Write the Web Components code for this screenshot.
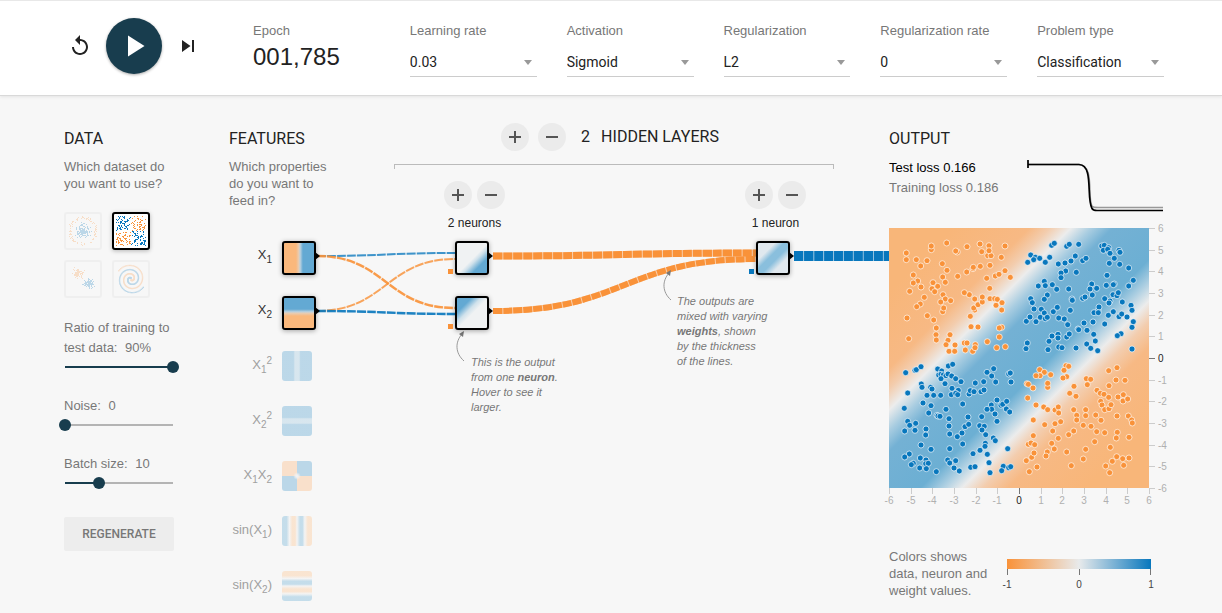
<!DOCTYPE html>
<html lang="en">
<head>
<meta charset="utf-8">
<title>Neural network playground</title>
<style>
html,body{margin:0}
body{background:#f7f7f7;color:#777;font:400 13px/17px "Liberation Sans",Arial,sans-serif}
</style>
</head>
<body>
<play-app></play-app>
<script>
const define = (name, html, setup) => {
  const tpl = document.createElement('template');
  tpl.innerHTML = html;
  customElements.define(name, class extends HTMLElement {
    constructor() {
      super();
      this.attachShadow({mode: 'open'}).append(tpl.content.cloneNode(true));
    }
    connectedCallback() { if (setup) setup(this, this.shadowRoot); }
  });
};
const BLUE = '#0877bd', ORANGE = '#f99239';
let seed = 7;
const rnd = () => (seed = (seed * 16807) % 2147483647) / 2147483647;
const gauss = () => rnd() + rnd() + rnd() + rnd() - 2;

/* Drop-down with its label */
define('labelled-select', `<style>
:host{display:block;min-width:0}
label{display:block;line-height:20px}
.box{position:relative;margin-top:6px}
select{appearance:none;display:block;width:100%;height:30px;margin:0;padding:1px 20px 0 0;border:0;border-bottom:1px solid #ccc;border-radius:0;background:none;color:#222;font:400 14px/28px Roboto,sans-serif}
.box::after{content:"";position:absolute;right:5px;top:13px;border:4px solid transparent;border-top:5px solid #999;border-bottom:0;pointer-events:none}
</style><label for="s"></label><div class="box"><select id="s"><option></option></select></div>`,
(el, r) => {
  r.querySelector('label').textContent = el.getAttribute('label');
  r.querySelector('option').textContent = el.getAttribute('value');
});

/* Round plus or minus button */
define('round-button', `<style>
:host{display:block}
button{display:grid;place-items:center;width:28px;height:28px;padding:0;border:0;border-radius:50%;background:#ebebeb}
svg{display:block}
</style><button><svg width="14" height="14" viewBox="0 0 14 14" fill="none" stroke="#555" stroke-width="2"><path/></svg></button>`,
(el, r) => {
  const plus = el.hasAttribute('plus');
  r.querySelector('path').setAttribute('d', plus ? 'M1 7h12M7 1v12' : 'M1 7h12');
  r.querySelector('button').setAttribute('aria-label', plus ? 'Add' : 'Remove');
});

define('range-field', `<style>
:host{display:block;margin-top:20px}
label{display:block;line-height:20px;white-space:nowrap}
b{font-weight:400;margin-left:4px}
input{appearance:none;display:block;width:calc(100% + 10px);height:18px;margin:0 -5px;
 background:linear-gradient(90deg,#183d4e var(--fill),#b4b4b4 var(--fill)) no-repeat center/calc(100% - 12px) 2px}
input::-webkit-slider-thumb{appearance:none;width:12px;height:12px;border-radius:50%;background:#183d4e}
</style><label for="r"><slot></slot> <b></b></label><input id="r" type="range">`,
(el, r) => {
  const i = r.querySelector('input'), g = n => +el.getAttribute(n);
  i.min = g('min'); i.max = g('max'); i.value = g('value');
  i.style.setProperty('--fill', (g('value') - g('min')) / (g('max') - g('min')) * 100 + '%');
  r.querySelector('b').textContent = g('value') + (el.getAttribute('unit') || '');
});

/* Small dataset preview */
define('dataset-thumb', `<style>
:host{display:block}
button{box-sizing:border-box;display:block;width:38px;height:38px;padding:0;border:2px solid #ebebeb;border-radius:3px;background:none;opacity:.6}
svg{display:block;opacity:.4}
:host([selected]) button{border-color:#000;background:#fff;opacity:1;box-shadow:0 1px 4px #0004}
:host([selected]) svg{opacity:1}
</style><button><svg width="34" height="34" viewBox="0 0 34 34"></svg></button>`,
(el, r) => {
  const kind = el.getAttribute('kind'), pts = [];
  r.querySelector('button').setAttribute('aria-label', kind);
  if (kind === 'circle') {
    for (let i = 0; i < 130; i++) pts.push([17 + gauss() * 5, 17 + gauss() * 5, BLUE]);
    for (let i = 0; i < 95; i++) { const a = rnd() * 6.283, d = 11.5 + rnd() * 3; pts.push([17 + d * Math.cos(a), 17 + d * Math.sin(a), ORANGE]); }
  } else if (kind === 'xor') {
    for (let i = 0; i < 270; i++) { const x = rnd() * 29, y = rnd() * 29; pts.push([x + 2 + (x > 14.5), y + 2 + (y > 14.5), (x > 14.5) === (y > 14.5) ? BLUE : ORANGE]); }
  } else if (kind === 'gauss') {
    for (let i = 0; i < 85; i++) { pts.push([12 + gauss() * 4, 11 + gauss() * 4, ORANGE]); pts.push([23 + gauss() * 4, 22 + gauss() * 4, BLUE]); }
  } else {
    for (let i = 0; i < 110; i++) { const t = i / 110, a = t * 10.5, d = 1 + t * 14;
      pts.push([17 + d * Math.sin(a), 17 + d * Math.cos(a), ORANGE], [17 - d * Math.sin(a), 17 - d * Math.cos(a), BLUE]); }
  }
  const snap = kind === 'spiral' ? n => (n - .6).toFixed(1) : n => Math.round(n - .5);
  const size = kind === 'spiral' ? 1.3 : 1;
  r.querySelector('svg').innerHTML = pts.map(p => `<rect x="${snap(p[0])}" y="${snap(p[1])}" width="${size}" height="${size}" fill="${p[2]}"/>`).join('');
});

/* One square of the diagram: a feature or a neuron */
define('heat-node', `<style>
:host{display:block;position:relative}
button{box-sizing:border-box;display:block;width:30px;height:30px;padding:0;border:0;border-radius:3px;background:var(--map);opacity:.4}
:host([on]) button{width:34px;height:34px;border:2px solid #000;background:var(--map) padding-box;opacity:1;box-shadow:0 1px 5px #0005}
:host([on])::after{content:"";position:absolute;left:33px;top:11px;border:4px solid transparent;border-left:5px solid #000;border-right:0}
:host([bias])::before{content:"";position:absolute;left:-7px;top:28px;width:5px;height:5px;background:var(--bias)}
</style><button></button>`,
(el, r) => r.querySelector('button').setAttribute('aria-label', el.getAttribute('name')));

define('top-bar', `<style>
:host{display:block;background:#fff;border-top:1px solid #e8e8e8;border-bottom:1px solid #d9d9d9;box-shadow:0 1px 3px #00000014}
.row{box-sizing:border-box;height:94px;padding:17px 58px 0 64px;display:grid;grid-template-columns:159px repeat(6,minmax(0,1fr));column-gap:30px}
.ctl{display:flex;align-items:center;gap:14px;height:56px;padding-left:4px}
button{display:grid;place-items:center;width:24px;height:24px;padding:0;border:0;background:none;fill:#222}
.play{width:56px;height:56px;border-radius:50%;background:#183d4e;fill:#fff;box-shadow:0 1px 3px #0005}
svg{display:block}
.f{padding-top:3px}
.k{line-height:20px}
.v{font-size:24px;line-height:32px;color:#222}
</style>
<div class="row">
<div class="ctl">
<button aria-label="Reset"><svg width="24" height="24" viewBox="0 0 24 24"><path d="M12 5V1L7 6l5 5V7c3.31 0 6 2.69 6 6s-2.69 6-6 6-6-2.69-6-6H4c0 4.42 3.58 8 8 8s8-3.58 8-8-3.58-8-8-8z"/></svg></button>
<button class="play" aria-label="Run"><svg width="36" height="36" viewBox="0 0 24 24"><path d="M8 5v14l11-7z"/></svg></button>
<button aria-label="Step"><svg width="24" height="24" viewBox="0 0 24 24"><path d="M6 18l8.5-6L6 6v12zM16 6v12h2V6h-2z"/></svg></button>
</div>
<div class="f"><div class="k">Epoch</div><div class="v">001,785</div></div>
<labelled-select class="f" label="Learning rate" value="0.03"></labelled-select>
<labelled-select class="f" label="Activation" value="Sigmoid"></labelled-select>
<labelled-select class="f" label="Regularization" value="L2"></labelled-select>
<labelled-select class="f" label="Regularization rate" value="0"></labelled-select>
<labelled-select class="f" label="Problem type" value="Classification"></labelled-select>
</div>`);

const HEAD = `h2{margin:0;font:400 16px/32px Roboto,sans-serif;color:#222;white-space:nowrap}p{margin:3px 0 0}`;

define('data-panel', `<style>
:host{display:block}${HEAD}
.sets{display:grid;grid-template-columns:38px 38px;gap:10px;margin-top:20px}
.go{display:block;width:100%;height:34px;margin-top:25px;padding:0;border:0;border-radius:2px;background:#ededed;color:#777;font:500 12px/34px Roboto,sans-serif}
</style>
<h2>DATA</h2><p>Which dataset do<br>you want to use?</p>
<div class="sets"><dataset-thumb kind="circle"></dataset-thumb><dataset-thumb kind="xor" selected></dataset-thumb><dataset-thumb kind="gauss"></dataset-thumb><dataset-thumb kind="spiral"></dataset-thumb></div>
<range-field min="10" max="90" value="90" unit="%">Ratio of training to<br>test data:</range-field>
<range-field min="0" max="50" value="0">Noise:</range-field>
<range-field min="1" max="30" value="10">Batch size:</range-field>
<button class="go">REGENERATE</button>`);

define('layer-control', `<style>
:host{display:block;text-align:center;color:#222;font-size:12px;line-height:16px}
div{display:flex;gap:5px;margin-bottom:6px}
</style><div><round-button plus></round-button><round-button></round-button></div><slot></slot>`);

/* Features, neurons and the weighted links between them */
define('network-canvas', `<style>
:host{display:block;position:relative}
.wires{position:absolute;left:0;top:0;width:100%;height:100%;overflow:visible}
ul{position:relative;list-style:none;margin:0;padding:0;width:87px;display:grid;grid-auto-rows:55px}
li{display:grid;grid-template-columns:43px 34px;column-gap:10px;align-items:start}
li span{justify-self:end;line-height:27px;font-size:13px;color:#a0a0a0;white-space:nowrap}
li.on span{color:#333}
sub,sup{font-size:10px;line-height:0}
.n{position:absolute}
.note{position:absolute;font-size:11px;line-height:15px;font-style:italic}
.note b{font-weight:700}
</style>
<svg class="wires" aria-hidden="true"></svg>
<ul>
<li class="on"><span>X<sub>1</sub></span><heat-node on name="X1" style="--map:linear-gradient(90deg,#fab87c 40%,#e8ccb2 49%,#bcd1de 54%,#63a9d3 63%)"></heat-node></li>
<li class="on"><span>X<sub>2</sub></span><heat-node on name="X2" style="--map:linear-gradient(#63a9d3 37%,#bcd1de 46%,#e8ccb2 51%,#fab87c 60%)"></heat-node></li>
<li><span>X<sub>1</sub><sup>2</sup></span><heat-node name="X1 squared" style="--map:linear-gradient(90deg,#63a9d3 38%,#a9cde2 43%,#a9cde2 57%,#63a9d3 62%)"></heat-node></li>
<li><span>X<sub>2</sub><sup>2</sup></span><heat-node name="X2 squared" style="--map:linear-gradient(#63a9d3 38%,#a9cde2 43%,#a9cde2 57%,#63a9d3 62%)"></heat-node></li>
<li><span>X<sub>1</sub>X<sub>2</sub></span><heat-node name="X1 times X2" style="--map:radial-gradient(circle,#e8eaec 5%,#e8eaec00 18%),conic-gradient(#63a9d3 25%,#fdc08a 0 50%,#63a9d3 0 75%,#fdc08a 0)"></heat-node></li>
<li><span>sin(X<sub>1</sub>)</span><heat-node name="sin X1" style="--map:linear-gradient(90deg,#78b6d8 15%,#eee 25%,#fdc998 34%,#fdc998 44%,#eee 50%,#78b6d8 60%,#78b6d8 68%,#eee 76%,#fdc998 86%)"></heat-node></li>
<li><span>sin(X<sub>2</sub>)</span><heat-node name="sin X2" style="--map:linear-gradient(#fdc998 15%,#eee 25%,#78b6d8 34%,#78b6d8 44%,#eee 50%,#fdc998 60%,#fdc998 68%,#eee 76%,#78b6d8 86%)"></heat-node></li>
</ul>
<heat-node class="n" on bias name="Neuron 1" style="left:226px;top:0;--bias:#f99239;--map:linear-gradient(135deg,#f0f2f3 52%,#cfe1eb 60%,#63a9d3 76%)"></heat-node>
<heat-node class="n" on bias name="Neuron 2" style="left:226px;top:55px;--bias:#f99239;--map:linear-gradient(135deg,#63a9d3 24%,#cfe1eb 40%,#f0f2f3 52%)"></heat-node>
<heat-node class="n" on bias name="Neuron 3" style="right:99px;top:0;--bias:#0877bd;--map:linear-gradient(135deg,#e0e8ee 28%,#8abfdd 43%,#8abfdd 57%,#e0e8ee 74%)"></heat-node>
<div class="note" style="left:242px;top:114px">This is the output<br>from one <b>neuron</b>.<br>Hover to see it<br>larger.</div>
<div class="note" style="right:112px;top:53px;width:100px">The outputs are<br>mixed with varying<br><b>weights</b>, shown<br>by the thickness<br>of the lines.</div>`,
(el, r) => {
  const svg = r.querySelector('svg');
  const link = (x0, y0, x1, y1, w, c, o = 1) => {
    const m = (x0 + x1) / 2, d = `M${x0} ${y0}C${m} ${y0} ${m} ${y1} ${x1} ${y1}`;
    return `<path d="${d}" fill="none" stroke="${c}" stroke-width="${w}" opacity="${w > 3 ? .4 : .1}"/><path d="${d}" fill="none" stroke="${c}" stroke-width="${w}" stroke-dasharray="${w > 3 ? '9 1' : '8.7 1.3'}" opacity="${o}"/>`;
  };
  const note = (x, y) => `<path d="M${x} ${y}c-9 -8 -9 -19 -2 -27" fill="none" stroke="#999"/><path d="M${x} ${y - 30}l-1 6l-4 -3z" fill="#777"/>`;
  const draw = () => {
    const W = el.clientWidth, o = W - 133;
    svg.innerHTML = link(88, 15, 226, 12, 2, BLUE, .75) + link(88, 70, 226, 18, 2, ORANGE, .8)
      + link(88, 15, 226, 67, 2.4, ORANGE, .9) + link(88, 70, 226, 73, 2.4, BLUE, .9)
      + link(264, 15, o, 12, 7, ORANGE) + link(264, 70, o, 18, 6, ORANGE)
      + link(W - 95, 15, W, 15, 10, BLUE) + note(235, 120) + note(W - 218, 59);
  };
  draw();
  new ResizeObserver(draw).observe(el);
});

define('network-panel', `<style>
:host{display:grid;grid-template-columns:165px minmax(0,1fr);grid-template-rows:118px auto;min-width:0}${HEAD}
.hid{margin-right:55px}
.top{display:flex;align-items:center;justify-content:center;height:28px;padding-right:8px}
.top round-button+round-button{margin-left:9px}
.top span{margin:0 11px 0 15px;color:#222;font:400 16px/32px Roboto,sans-serif}
.bracket{height:5px;margin-top:13px;border:1px solid #bbb;border-bottom:0;box-sizing:border-box}
.layers{display:flex;justify-content:space-between;padding:0 28px 0 50px;margin-top:12px}
network-canvas{grid-column:1/-1}
</style>
<div><h2>FEATURES</h2><p>Which properties<br>do you want to<br>feed in?</p></div>
<div class="hid"><div class="top"><round-button plus></round-button><round-button></round-button><span>2</span><h2>HIDDEN LAYERS</h2></div>
<div class="bracket"></div>
<div class="layers"><layer-control>2 neurons</layer-control><layer-control>1 neuron</layer-control></div></div>
<network-canvas></network-canvas>`);

/* Samples, in thirds of a pixel from each quadrant's own origin */
const SAMPLES = [
 [ORANGE, -4, -3, '64,84 64,104 94,104 107,123 126,107 139,74 139,63 185,54 217,81 212,78 246,65 285,57 290,80 312,62 308,92 318,92 312,77 360,63 349,97 172,116 186,136 173,156 218,154 245,141 264,131 265,127 286,124 315,121 305,160 331,153 342,148 360,137 376,157 85,150 98,168 85,174 108,186 74,199 144,173 141,191 158,184 149,200 181,172 174,209 181,222 197,227 167,231 118,217 106,237 95,245 173,260 176,249 127,272 146,285 66,279 71,341 154,309 153,329 154,345 195,329 189,346 183,359 210,360 192,379 209,379 238,354 246,354 241,375 263,379 271,359 270,368 258,305 279,306 256,274 269,255 266,249 279,239 292,231 292,216 269,222 253,209 238,203 314,190 315,221 329,221 337,223 351,233 333,241 350,255 350,307 343,309 343,336 307,350 335,368 361,365'],
 [BLUE, 126, -3, '110,61 118,55 155,64 163,58 191,58 260,63 268,61 265,76 281,68 278,73 285,85 312,76 315,82 298,100 283,115 314,118 341,129 276,151 47,90 61,97 56,104 74,100 91,112 38,112 104,97 181,93 168,108 203,107 213,100 150,114 130,117 152,138 138,144 138,158 184,142 88,169 70,183 91,182 112,179 125,193 161,192 230,177 225,192 245,190 274,181 298,177 295,179 341,183 355,166 47,221 52,233 97,210 88,223 171,222 172,226 203,220 210,216 232,210 269,221 285,228 282,234 294,209 306,212 310,203 322,231 348,241 351,256 57,252 79,253 88,264 115,260 127,247 166,256 250,256 252,246 237,263 250,263 280,271 295,260 312,275 320,267 336,276 355,290 351,307 34,289 45,276 63,290 76,277 91,281 97,277 131,279 148,282 158,299 207,294 234,291 269,297 189,312 191,314 216,316 236,328 318,326 307,332 111,333 129,328 129,339 102,349 155,336 163,327 241,348 215,357 227,370 248,377 183,369 131,366 141,368 99,374 351,372 37,354 33,371'],
 [BLUE, -4, 127, '62,53 90,46 94,44 108,35 158,42 170,48 190,33 203,28 161,60 168,58 175,60 168,71 183,62 189,57 200,63 212,71 228,80 180,86 109,87 111,97 137,97 141,102 68,114 201,100 220,106 199,119 212,115 218,119 126,121 146,121 167,121 114,144 138,152 58,160 183,163 131,174 156,181 159,183 165,184 192,191 68,199 74,211 92,205 59,228 90,226 123,222 122,240 192,213 194,237 217,245 231,234 240,215 251,208 249,186 233,147 252,117 256,107 267,110 271,84 296,80 306,52 326,41 320,63 332,81 371,57 376,54 378,81 288,110 297,105 336,135 348,151 353,148 365,139 364,162 374,171 319,150 320,163 306,163 330,177 336,199 290,185 284,212 298,214 291,225 302,239 325,249 331,257 108,270 138,283 194,281 233,267 264,296 285,286 301,265 300,274 307,298 368,281 73,297 59,306 106,309 123,315 85,325 79,329 122,326 130,325 104,339 124,341 154,350 188,315 194,324 212,317 207,339 223,348 257,337 270,335 312,323 315,353 355,334 350,347 371,338 377,335'],
 [ORANGE, 126, 127, '153,32 161,34 147,46 155,65 144,69 74,44 88,52 75,62 63,62 107,59 36,86 40,88 54,99 98,97 98,85 38,129 63,150 86,156 98,164 120,165 130,156 131,174 177,94 164,115 183,124 214,71 227,73 217,89 281,47 306,38 303,75 330,76 282,92 246,106 256,115 267,118 281,127 309,126 325,119 324,138 338,132 257,139 261,150 269,164 282,161 288,149 212,164 176,164 185,181 212,182 185,195 242,180 258,196 306,183 340,183 350,195 352,204 205,211 228,214 55,195 89,209 120,206 137,200 113,228 55,242 40,268 48,264 59,269 130,250 110,265 118,282 161,239 176,228 155,291 97,291 93,303 50,307 57,294 34,317 66,336 43,350 169,332 205,312 212,283 239,260 245,230 269,233 307,232 304,249 342,247 286,277 305,305 323,311 292,319 272,333 326,331 342,309 284,353']];

define('output-map', `<style>
:host{display:block;margin-top:15px}
.map{position:relative;width:260px;height:276px}
.heat{height:260px;background:linear-gradient(135deg,#f8b679 12%,#f7b984 27%,#f3cdae 31%,#ececec 35%,#a9cde1 39%,#74b1d4 43%,#6cafd3 56%,#a9cde1 60%,#ececec 64%,#f3cdae 68%,#f7b984 73%,#f8b679 88%)}
svg{position:absolute;left:0;top:0;overflow:visible}
text{font:400 10px "Liberation Sans",sans-serif;fill:#b0b0b0}
text.z{fill:#222}
</style><div class="map"><div class="heat"></div><svg width="260" height="276"></svg></div>`,
(el, r) => {
  let s = '';
  for (const [c, dx, dy, list] of SAMPLES)
    for (const p of list.split(' ')) {
      const [x, y] = p.split(',');
      s += `<circle cx="${(x / 3 + dx).toFixed(1)}" cy="${(y / 3 + dy).toFixed(1)}" r="3" fill="${c}" stroke="#fff" stroke-opacity=".65"/>`;
    }
  for (let i = -6; i <= 6; i++) {
    const x = Math.round((i + 6) * 260 / 12), y = 260 - x, c = i ? '' : ' class="z"', k = i ? '#ccc' : '#777';
    s += `<path d="M${x + .5} 260v6M260 ${y + .5}h6" stroke="${k}"/><text${c} x="${x}" y="276" text-anchor="middle">${i}</text><text${c} x="269" y="${y + 4}">${i}</text>`;
  }
  r.querySelector('svg').innerHTML = s;
});

define('output-panel', `<style>
:host{display:block}${HEAD}
.loss{display:flex;justify-content:space-between;margin-top:3px;line-height:20px;white-space:nowrap}
.test{color:#000}
svg{display:block;overflow:visible;flex:none}
.legend{display:grid;grid-template-columns:118px 144px;margin-top:44px;white-space:nowrap}
.bar{height:10px;background:linear-gradient(90deg,#f99239,#e8eaeb 50%,#0877bd)}
.key{padding-top:11px}
text{font:400 10px "Liberation Sans",sans-serif;fill:#444}
</style>
<h2>OUTPUT</h2>
<div class="loss"><div><div class="test">Test loss <span>0.166</span></div><div>Training loss <span>0.186</span></div></div>
<svg width="138" height="55" viewBox="0 0 138 55" fill="none" aria-hidden="true"><path d="M2 6.5H53C69 7 61 40 66 48Q67 49.500 72 49.500H137" stroke="#999" stroke-width="1.500"/><path d="M2 2v8M2 6.500H53C68 7 60 40 66 50.500Q67 52.500 71 52.500H137" stroke="#000" stroke-width="1.700"/></svg></div>
<output-map></output-map>
<div class="legend"><div>Colors shows<br>data, neuron and<br>weight values.</div><div class="key"><div class="bar"></div>
<svg width="144" height="22"><path d="M.5 0v6M72.500 0v6M143.500 0v6" stroke="#777"/><text x="0" y="19" text-anchor="middle">-1</text><text x="72" y="19" text-anchor="middle">0</text><text x="144" y="19" text-anchor="middle">1</text></svg></div></div>`);

define('play-app', `<style>
:host{display:block}
main{display:grid;grid-template-columns:110px minmax(0,1fr) 275px;padding:27px 58px 0 64px}
network-panel{margin-left:55px}
</style><top-bar></top-bar><main><data-panel></data-panel><network-panel></network-panel><output-panel></output-panel></main>`);
</script>
</body>
</html>
